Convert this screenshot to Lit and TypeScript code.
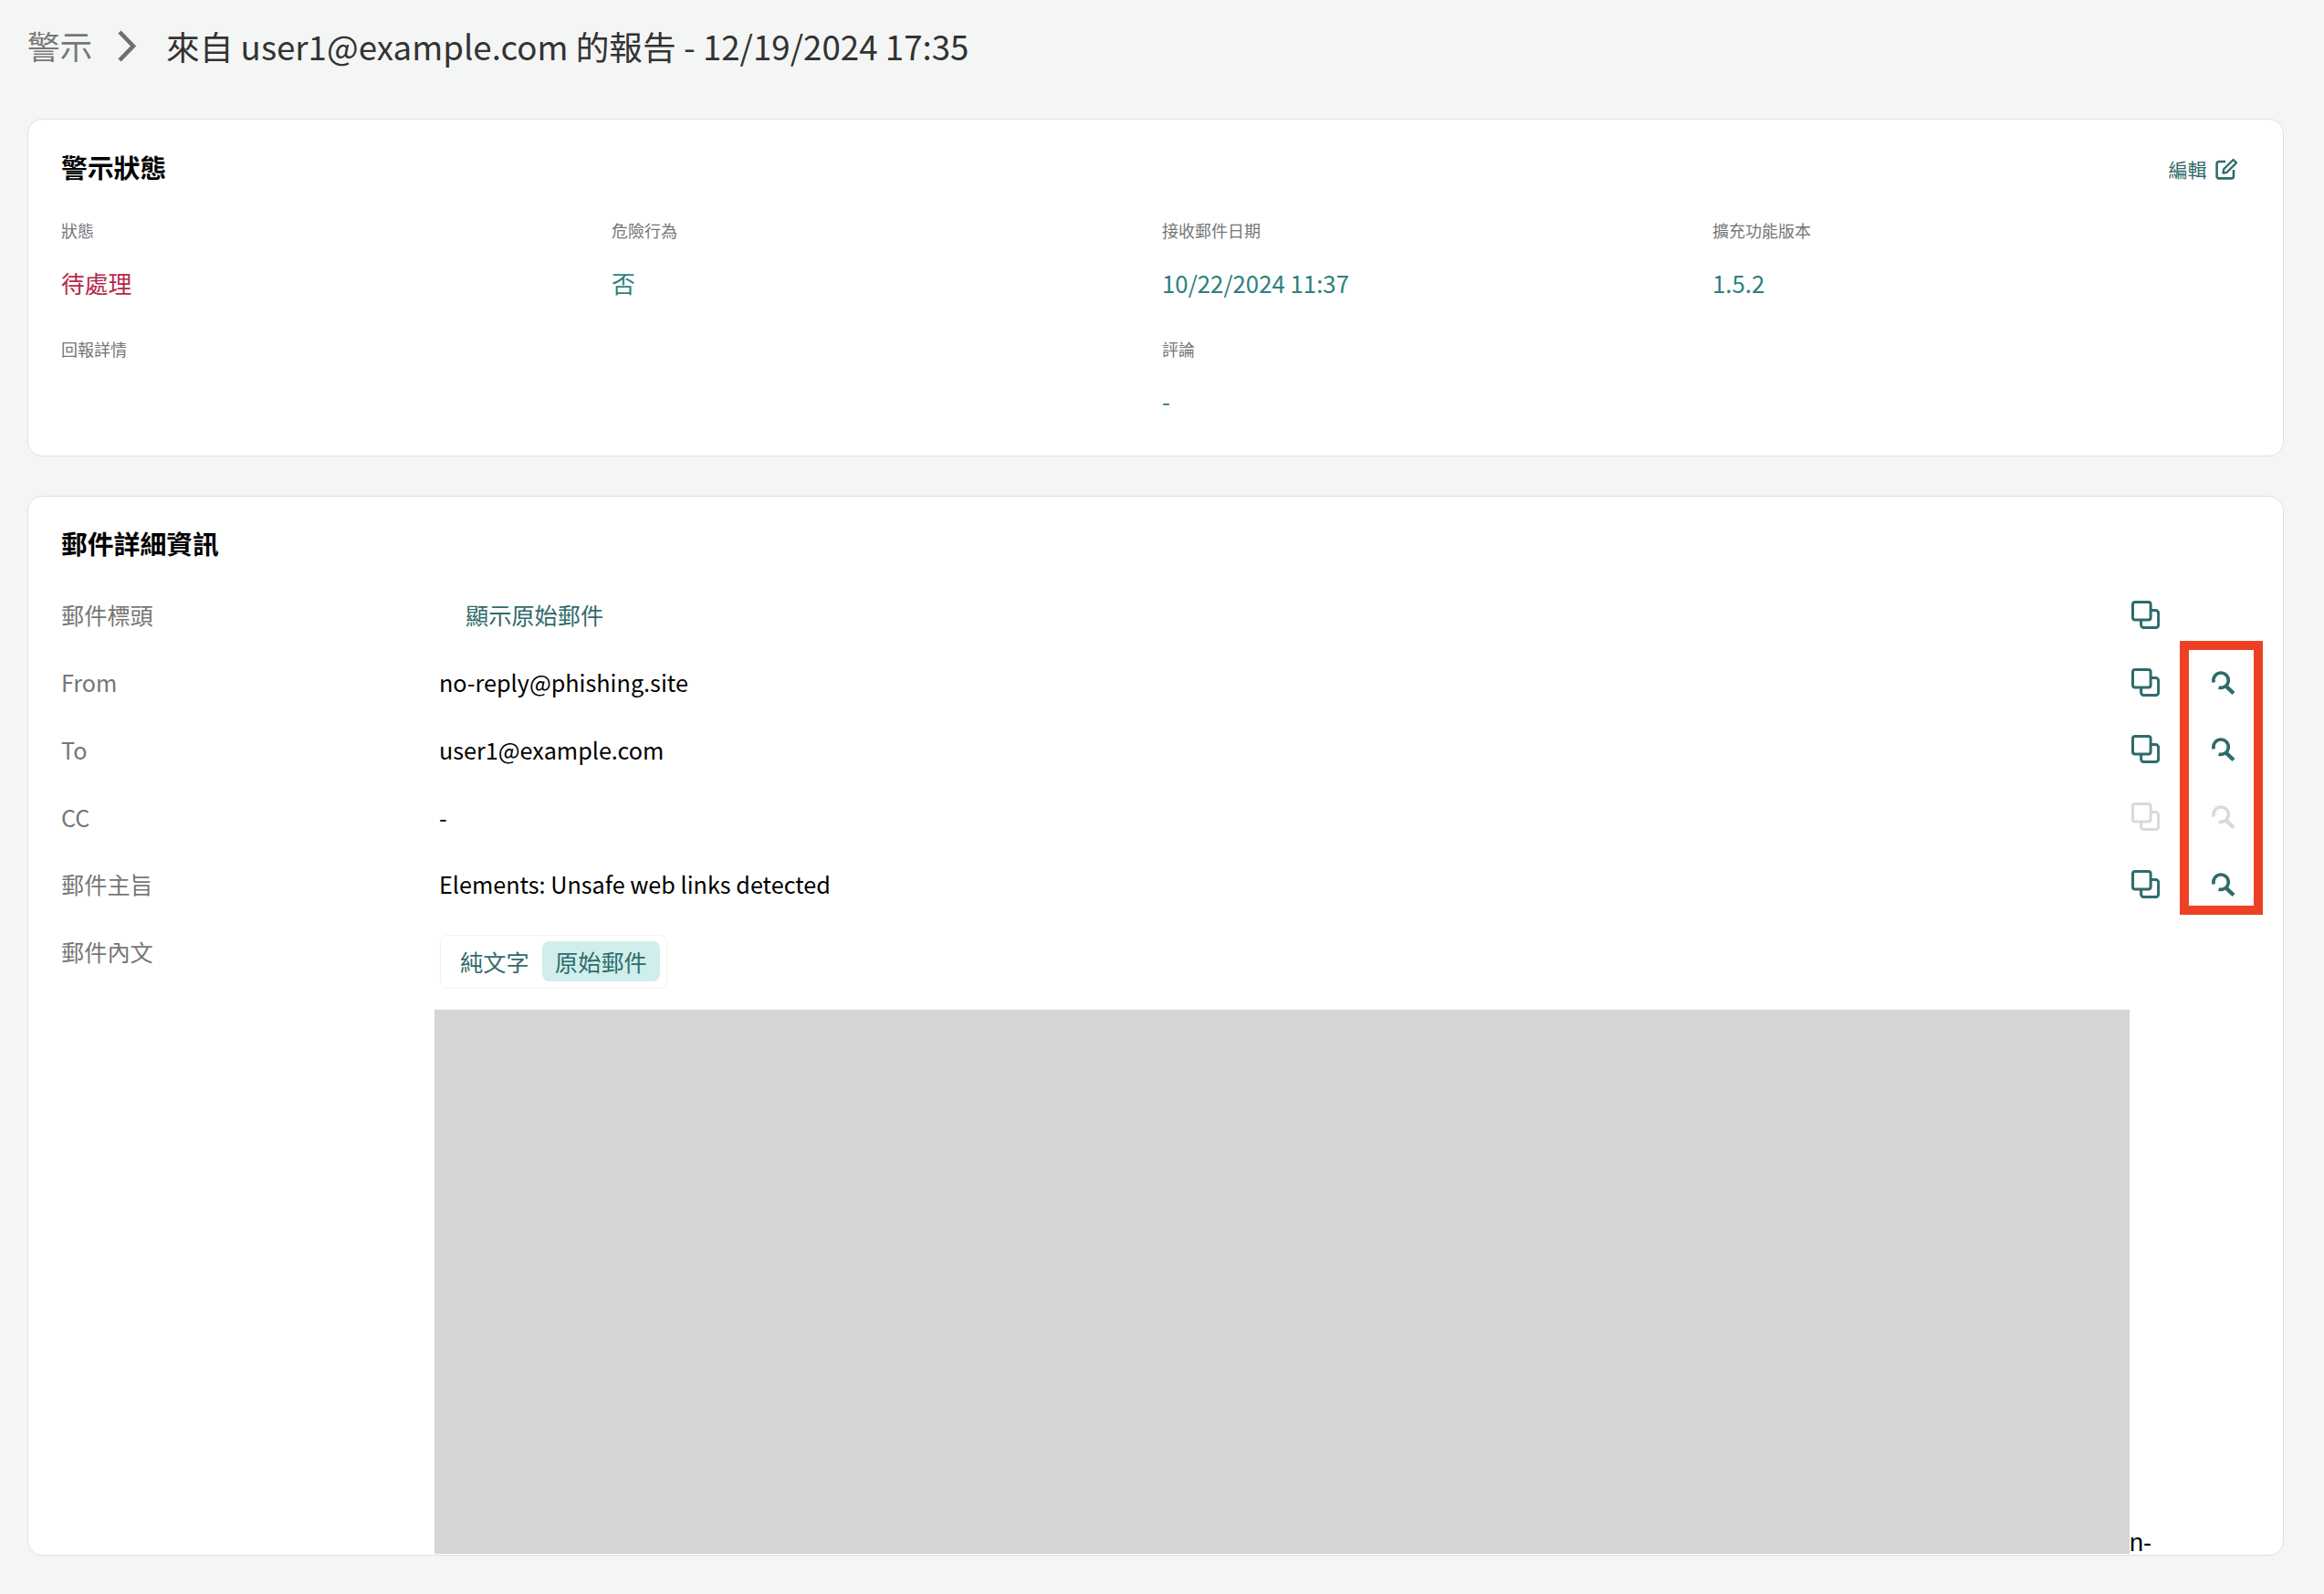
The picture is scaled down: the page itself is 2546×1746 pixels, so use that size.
import { LitElement, html, css, svg } from "lit";
import { customElement } from "lit/decorators.js";

const copyIcon = (off = false) => html`<svg class="copy ${off ? "off" : ""}" viewBox="0 0 31 31" fill="none" stroke="currentColor" stroke-width="3" stroke-linejoin="round">
  ${svg`<rect x="1.5" y="1.5" width="19.6" height="19.6" rx="2.6"/><path d="M21 10.6h5.6a3 3 0 0 1 3 3v13a3 3 0 0 1-3 3h-13a3 3 0 0 1-3-3v-5.6"/>`}
</svg>`;

const searchIcon = (off = false) => html`<svg class="search ${off ? "off" : ""}" viewBox="0 0 28 28" fill="none" stroke="currentColor">
  ${svg`<path d="M3.2 13.4A8.2 8.2 0 1 1 8.6 19" stroke-width="3.6"/><path d="M15.5 16.5l9.5 9" stroke-width="4.4"/>`}
</svg>`;

@customElement("app-root")
export class AppRoot extends LitElement {
  static styles = css`
    :host {
      display: block;
      height: 1746px;
      box-sizing: border-box;
      background: #f4f6f5;
      font-family: "Noto Sans CJK TC", "Noto Sans", sans-serif;
      color: #000;
      padding: 0 44px 42px 30px;
    }
    .page { display: flex; flex-direction: column; height: 100%; gap: 43px; }
    .crumbs {
      height: 87px;
      box-sizing: border-box;
      padding-top: 12px;
      display: flex;
      align-items: center;
      font-size: 36.7px;
      color: #333;
      white-space: nowrap;
    }
    .crumbs .root { color: #787878; font-size: 35.5px; }
    .crumbs svg { width: 24px; height: 35px; margin: 2px 31px 0 26px; color: #6f6f6f; }
    .card {
      background: #fff;
      border: 1.6px solid #e0e0e0;
      border-radius: 16px;
      box-sizing: border-box;
      position: relative;
      overflow: hidden;
      padding: 0 20px 0 36px;
    }
    .status { height: 370px; flex: none; }
    .detail { flex: 1; min-height: 0; }
    .head {
      height: 74px;
      display: flex;
      align-items: flex-end;
      justify-content: space-between;
    }
    h2 { margin: 0; font-size: 28.8px; font-weight: 700; line-height: 44px; }
    .edit {
      display: flex;
      align-items: center;
      gap: 9px;
      color: #2f6b6b;
      font-size: 21px;
      line-height: 44px;
      margin: 0 30.5px -2px 0;
    }
    .edit svg { width: 24px; height: 24px; }
    .facts {
      display: grid;
      grid-template-columns: repeat(4, 603px);
      grid-template-rows: 164px 100px;
    }
    .fact.wide { grid-column: span 2; }
    .fact small { display: block; font-size: 18px; line-height: 26px; margin-top: 34px; color: #767676; }
    .fact div { font-size: 25.8px; line-height: 38px; margin-top: 26px; color: #2e7f7c; }
    .fact div.alert { color: #b7274a; }
    .fact.wide small { margin-top: 0; }
    .fact.wide div { margin-top: 24.5px; }
    .detail .head { height: 72.6px; }
    .rows {
      display: grid;
      grid-template-columns: 409px 1857px 67px 72px;
      grid-auto-rows: 73.8px;
      margin-top: 19.8px;
      font-size: 25.2px;
    }
    .rows > * { display: flex; align-items: center; min-width: 0; }
    .label { color: #767676; }
    .value { padding-left: 5px; }
    .value.link { padding-left: 34px; color: #2f6b6b; }
    .copy { width: 31px; height: 31px; margin-left: 2px; color: #2f6b6b; }
    .search { width: 28px; height: 28px; margin: 1px 0 0 22px; color: #2f6b6b; }
    .off { color: #d9d9d9; }
    .body-label { align-self: start; height: 73.8px; }
    .body { grid-column: 2 / 5; display: block !important; }
    .tabs {
      margin: 18.6px 0 0 6px;
      width: 249px;
      height: 59px;
      box-sizing: border-box;
      border: 1.6px solid #f1f3f2;
      border-radius: 8px;
      display: flex;
      align-items: center;
      padding-left: 21px;
      color: #2f6b6b;
      white-space: nowrap;
    }
    .tab { width: 90px; line-height: 44px; }
    .tab.on {
      width: 129px;
      height: 44px;
      box-sizing: border-box;
      padding-left: 14px;
      background: #cfeeec;
      border-radius: 8px;
    }
    .mail { display: flex; align-items: flex-end; margin-top: 23.5px; }
    .blank { width: 1857px; height: 596px; background: #d5d5d5; flex: none; }
    .tail { font-family: "Liberation Sans", Arial, sans-serif; font-size: 27px; line-height: 20px; margin-bottom: 2.5px; }
    .mark {
      position: absolute;
      left: 2357px;
      top: 158px;
      width: 91px;
      height: 300px;
      box-sizing: border-box;
      border: 10.5px solid #ec4124;
      pointer-events: none;
    }
  `;

  private row(label: string, value: unknown, off = false, hasSearch = true, link = false) {
    return html`
      <div class="label">${label}</div>
      <div class="value ${link ? "link" : ""}">${value}</div>
      <div>${copyIcon(off)}</div>
      <div>${hasSearch ? searchIcon(off) : ""}</div>
    `;
  }

  render() {
    return html`
      <div class="page">
        <header class="crumbs">
          <span class="root">警示</span>
          <svg viewBox="0 0 24 35" fill="none" stroke="currentColor" stroke-width="4.6"><path d="M4 2l15 15.500L4 33"/></svg>
          <span>來自 user1@example.com 的報告 - 12/19/2024 17:35</span>
        </header>

        <section class="card status">
          <div class="head">
            <h2>警示狀態</h2>
            <span class="edit">編輯
              <svg viewBox="0 0 24 24" fill="none" stroke="currentColor">
                <path d="M11 4H4a2.4 2.4 0 0 0-2.4 2.4v14A2.4 2.4 0 0 0 4 22.4h13.6a2.4 2.4 0 0 0 2.4-2.4v-7" stroke-width="2.6"/>
                <path d="M8.5 16.5l.7-4.2L19.6 2l3.4 3.4L12.6 15.8z" stroke-width="2.3" stroke-linejoin="round"/>
              </svg>
            </span>
          </div>
          <div class="facts">
            <div class="fact"><small>狀態</small><div class="alert">待處理</div></div>
            <div class="fact"><small>危險行為</small><div>否</div></div>
            <div class="fact"><small>接收郵件日期</small><div>10/22/2024 11:37</div></div>
            <div class="fact"><small>擴充功能版本</small><div>1.5.2</div></div>
            <div class="fact wide"><small>回報詳情</small></div>
            <div class="fact wide"><small>評論</small><div>-</div></div>
          </div>
        </section>

        <section class="card detail">
          <div class="head"><h2>郵件詳細資訊</h2></div>
          <div class="rows">
            ${this.row("郵件標頭", "顯示原始郵件", false, false, true)}
            ${this.row("From", "no-reply@phishing.site")}
            ${this.row("To", "user1@example.com")}
            ${this.row("CC", "-", true)}
            ${this.row("郵件主旨", "Elements: Unsafe web links detected")}
            <div class="label body-label">郵件內文</div>
            <div class="body">
              <div class="tabs">
                <span class="tab">純文字</span>
                <span class="tab on">原始郵件</span>
              </div>
              <div class="mail"><div class="blank"></div><span class="tail">n-</span></div>
            </div>
          </div>
          <div class="mark"></div>
        </section>
      </div>
    `;
  }
}
